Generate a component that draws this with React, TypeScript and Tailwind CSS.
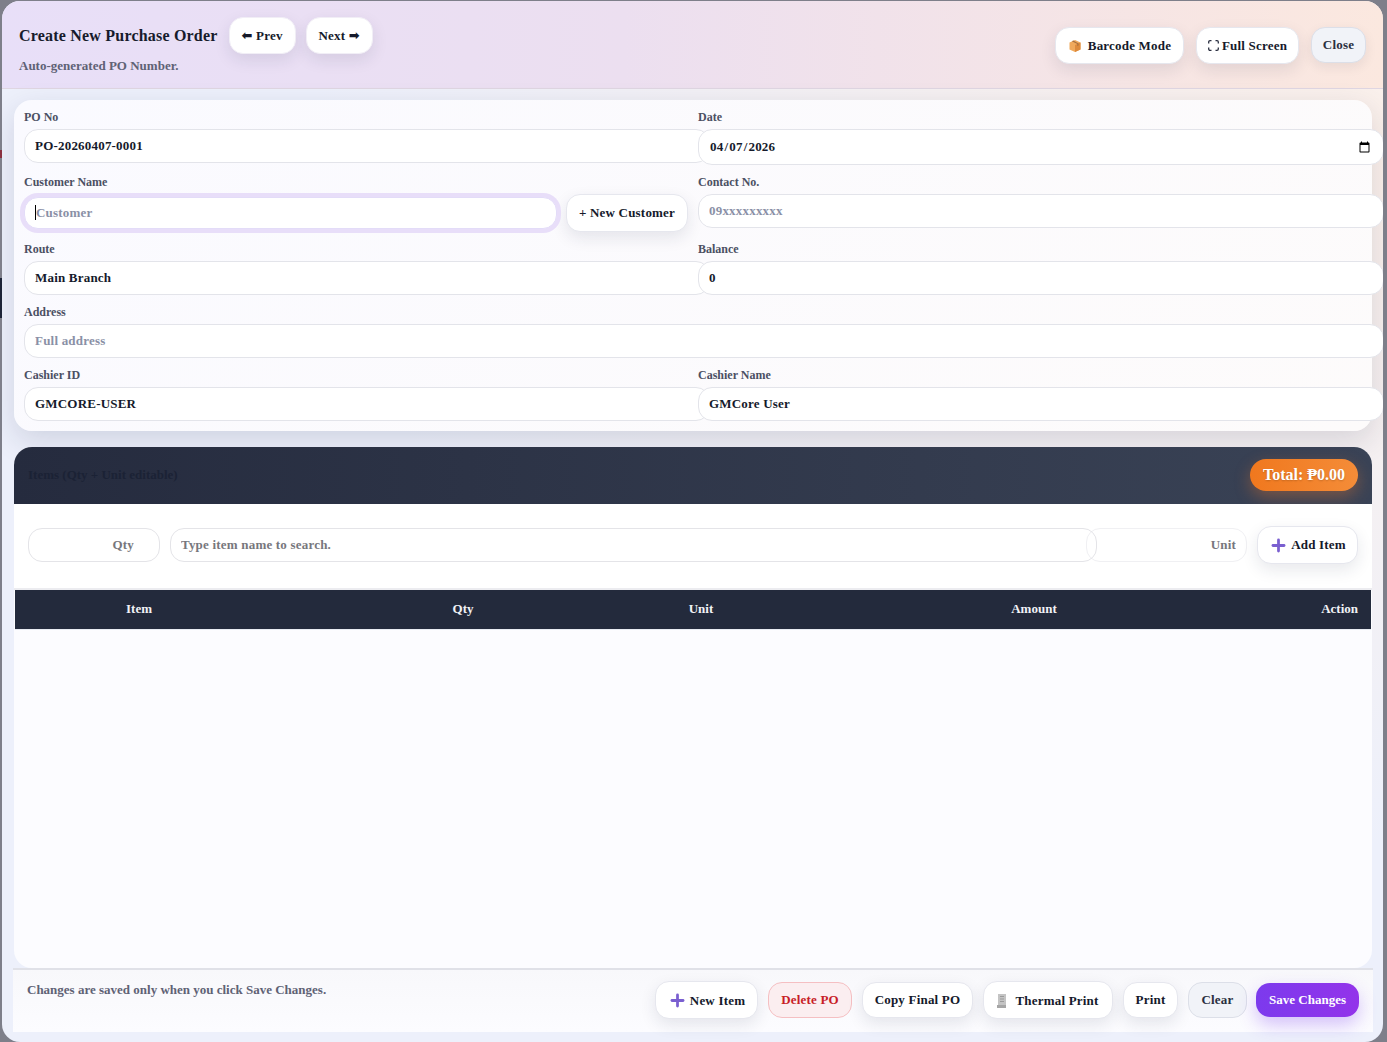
import { Plus } from "lucide-react"

const font = { fontFamily: '"Liberation Serif", "DejaVu Sans", serif' }

const label = "block h-[19px] text-[12px] leading-[14px] font-bold text-[#4b5063]"
const field =
  "box-content block w-full h-[32px] px-[10px] rounded-[14px] border border-[#e3e4ea] bg-white text-[13px] font-bold tracking-[0.2px] text-[#151a2b] outline-none placeholder:text-[#8a90a6]"
const btn =
  "flex items-center justify-center rounded-[14px] border border-[#e6e7ee] bg-white text-[13px] font-bold tracking-[0.2px] text-[#151a2b] shadow-[0_6px_16px_rgba(30,35,70,0.1)]"

function Field({ title, value, placeholder }: { title: string; value?: string; placeholder?: string }) {
  return (
    <div>
      <label className={label}>{title}</label>
      <input className={field} defaultValue={value} placeholder={placeholder} readOnly />
    </div>
  )
}

function BoxIcon() {
  return (
    <svg width="14" height="14" viewBox="0 0 14 14" className="mr-[6px]">
      <path d="M7 1l5.500 2.600v6.800L7 13 1.500 10.400V3.600z" fill="#f0a95c" />
      <path d="M7 6v7l5.500-2.600V3.600z" fill="#dd8a3c" />
      <path d="M3.800 2.300l5.500 2.700v2l1.300-.6v-2L5.200 1.600z" fill="#a9713f" />
    </svg>
  )
}

function ExpandIcon() {
  return (
    <svg width="11" height="11" viewBox="0 0 11 11" fill="none" stroke="#2a2f40" strokeWidth="1.300" className="mr-[3px]">
      <path d="M.7 3.500V2A1.300 1.300 0 0 1 2 .7h1.500M7.500.7H9A1.300 1.300 0 0 1 10.300 2v1.500M10.300 7.500V9A1.300 1.300 0 0 1 9 10.300H7.500M3.500 10.300H2A1.300 1.300 0 0 1 .7 9V7.500" />
    </svg>
  )
}

function ReceiptIcon() {
  return (
    <svg width="10" height="14" viewBox="0 0 10 14" className="mr-[8px]">
      <path d="M1 0h8v14H0v-3h1z" fill="#c4c4c4" />
      <path d="M3 2.500h4M3 5h4M3 7.500h4" stroke="#9b9b9b" strokeWidth="1" />
      <rect x="0" y="11" width="9" height="3" fill="#a6a6a6" />
    </svg>
  )
}

export default function App() {
  return (
    <div style={font} className="relative h-[1042px] w-[1387px] overflow-hidden bg-[#7e7f8a] pl-[2px] pr-[4px] pt-[1px]">
      <span className="absolute left-0 top-[150px] h-[8px] w-[2px] bg-[#8a3040]" />
      <span className="absolute left-0 top-[278px] h-[40px] w-[2px] bg-[#1d2438]" />
      <div className="relative h-[1041px] overflow-hidden rounded-[18px] bg-[radial-gradient(ellipse_at_100%_15%,#fbf0ea_0%,#edf0fb_55%)]">
        <header className="box-content flex h-[87px] justify-between border-b border-[#dfd6e2] bg-[linear-gradient(90deg,#e8dff8_0%,#ecdff0_45%,#fbe8df_100%)] pl-[17px] pr-[17px]">
          <div className="pt-4">
            <div className="flex items-center">
              <h2 className="text-[16px] font-bold tracking-[0.2px] text-[#171b2c]">Create New Purchase Order</h2>
              <button className={`${btn} ml-[11px] h-[37px] w-[67px] border-[#f1eef6]`}>⬅ Prev</button>
              <button className={`${btn} ml-[10px] h-[37px] w-[67px] border-[#f1eef6]`}>Next ➡</button>
            </div>
            <p className="mt-[2px] text-[13px] font-bold text-[#5f6275]">Auto-generated PO Number.</p>
          </div>
          <div className="flex items-start gap-3 pt-[26px]">
            <button className={`${btn} h-[37px] w-[129px]`}>
              <BoxIcon />
              Barcode Mode
            </button>
            <button className={`${btn} h-[37px] w-[103px]`}>
              <ExpandIcon />
              Full Screen
            </button>
            <button className="h-[36px] w-[55px] rounded-[14px] border border-[#dcdfe8] bg-[#f1f3f8] text-[13px] font-bold tracking-[0.2px] text-[#2a2f40] shadow-[0_4px_12px_rgba(30,35,70,0.08)]">
              Close
            </button>
          </div>
        </header>

        <div className="pl-3 pr-[11px] pt-[11px]">
          <section className="h-[331px] rounded-[18px] bg-[linear-gradient(135deg,#fafaff,#fdfbfb)] px-[10px] pt-[10px] shadow-[0_10px_30px_rgba(30,35,70,0.14)]">
            <div className="grid grid-cols-[664px_664px] gap-x-[10px] gap-y-[10px]">
              <Field title="PO No" value="PO-20260407-0001" />
              <div>
                <label className={label}>Date</label>
                <input type="date" className={`${field} relative z-10 !h-[34px]`} defaultValue="2026-04-07" />
              </div>
              <div>
                <label className={label}>Customer Name</label>
                <div className="flex items-start gap-[9px]">
                  <div className="relative mt-[3px]">
                    <input
                      placeholder="Customer"
                      className="block h-[32px] w-[533px] rounded-[14px] border border-[#e3dcf8] bg-white pl-[11px] pr-[10px] text-[13px] font-bold tracking-[0.2px] text-[#151a2b] outline-none ring-4 ring-[#e8def9] placeholder:text-[#8a90a6]"
                    />
                    <span className="absolute left-[11px] top-[8px] h-[15px] w-px bg-black" />
                  </div>
                  <button className={`${btn} h-[38px] w-[122px]`}>+ New Customer</button>
                </div>
              </div>
              <div className="relative z-10">
                <Field title="Contact No." placeholder="09xxxxxxxxx" />
              </div>
              <Field title="Route" value="Main Branch" />
              <div className="relative z-10">
                <Field title="Balance" value="0" />
              </div>
              <div className="col-span-2">
                <Field title="Address" placeholder="Full address" />
              </div>
              <Field title="Cashier ID" value="GMCORE-USER" />
              <div className="relative z-10">
                <Field title="Cashier Name" value="GMCore User" />
              </div>
            </div>
          </section>

          <section className="relative z-20 mt-[16px] flex h-[521px] flex-col overflow-hidden rounded-[18px] bg-[#fcfcff]">
            <div className="flex h-[57px] shrink-0 items-center justify-between bg-[linear-gradient(90deg,#252b3e,#3a4356)] pb-px pl-[14px] pr-[14px]">
              <h3 className="text-[13px] font-bold text-[#1b2235]">Items (Qty + Unit editable)</h3>
              <div className="flex h-[32px] w-[108px] items-center justify-center rounded-full bg-[linear-gradient(90deg,#f0781e,#f48c38)] text-[16px] font-bold text-white shadow-[0_6px_16px_rgba(244,120,40,0.35)] [text-shadow:0_1px_2px_rgba(0,0,0,0.2)]">
                Total: ₱0.00
              </div>
            </div>
            <div className="flex h-[86px] shrink-0 items-center border-b-2 border-[#ececf0] bg-white pb-[2px] pl-[14px] pr-[14px]">
              <input
                readOnly
                placeholder="Qty"
                className="h-[34px] w-[132px] rounded-[14px] border border-[#e4e4e8] bg-white pr-[25px] text-right text-[13px] font-bold tracking-[0.2px] outline-none placeholder:text-[#77777d]"
              />
              <input
                readOnly
                placeholder="Type item name to search."
                className="relative z-10 ml-[10px] h-[34px] w-[927px] rounded-[14px] border border-[#e4e4e8] bg-transparent px-[10px] text-[13px] font-bold tracking-[0.2px] outline-none placeholder:text-[#77777d]"
              />
              <input
                readOnly
                placeholder="Unit"
                className="-ml-[11px] h-[34px] w-[161px] rounded-[14px] border border-[#f0f0f3] bg-white px-[10px] text-right text-[13px] font-bold tracking-[0.2px] outline-none placeholder:text-[#77777d]"
              />
              <button className={`${btn} ml-[10px] h-[38px] w-[101px]`}>
                <Plus size={19} strokeWidth={3.5} className="mr-[3px] text-[#7a5fd0]" />
                Add Item
              </button>
            </div>
            <table className="ml-[1px] w-[1356px] table-fixed border-b border-[#e8ebf2]">
              <colgroup>
                <col className="w-[248px]" />
                <col className="w-[400px]" />
                <col className="w-[76px]" />
                <col className="w-[561px]" />
                <col />
              </colgroup>
              <thead>
                <tr className="h-[39px] bg-[#232a3c] text-[13px] font-bold text-[#f1f2f6]">
                  <th className="pb-[2px] text-center font-bold">Item</th>
                  <th className="pb-[2px] text-center font-bold">Qty</th>
                  <th className="pb-[2px] text-center font-bold">Unit</th>
                  <th className="pb-[2px] pl-[29px] text-center font-bold">Amount</th>
                  <th className="whitespace-nowrap pb-[2px] pr-[13px] text-right font-bold">Action</th>
                </tr>
              </thead>
            </table>
          </section>

          <footer className="relative z-10 -ml-px -mr-px flex h-[64px] items-start justify-between border-t-2 border-[#e0e1e8] bg-[linear-gradient(180deg,#f8f8fb,#fcfcff)] pl-[14px] pr-[14px]">
            <p className="mt-[10px] text-[13px] font-bold text-[#5f6275]">Changes are saved only when you click Save Changes.</p>
            <div className="mt-[11px] flex items-center gap-[10px]">
              <button className={`${btn} h-[38px] w-[103px] pt-px`}>
                <Plus size={19} strokeWidth={3.5} className="mr-[3px] text-[#7a5fd0]" />
                New Item
              </button>
              <button className="h-[36px] w-[84px] rounded-[14px] border border-[#f5bfc2] bg-[#fbeef0] text-[13px] font-bold tracking-[0.2px] text-[#c81e28]">
                Delete PO
              </button>
              <button className={`${btn} h-[36px] w-[111px]`}>Copy Final PO</button>
              <button className={`${btn} h-[38px] w-[130px] pt-px`}>
                <ReceiptIcon />
                Thermal Print
              </button>
              <button className={`${btn} h-[36px] w-[55px]`}>Print</button>
              <button className="h-[36px] w-[59px] rounded-[14px] border border-[#dcdfe8] bg-[#f1f3f8] text-[13px] font-bold tracking-[0.2px] text-[#2a2f40]">
                Clear
              </button>
              <button className="-ml-px h-[34px] w-[103px] rounded-[14px] bg-[linear-gradient(90deg,#7c3aed,#9333ea)] text-[13px] font-bold text-white shadow-[0_8px_18px_rgba(124,58,237,0.3)]">
                Save Changes
              </button>
            </div>
          </footer>
        </div>
      </div>
    </div>
  )
}
